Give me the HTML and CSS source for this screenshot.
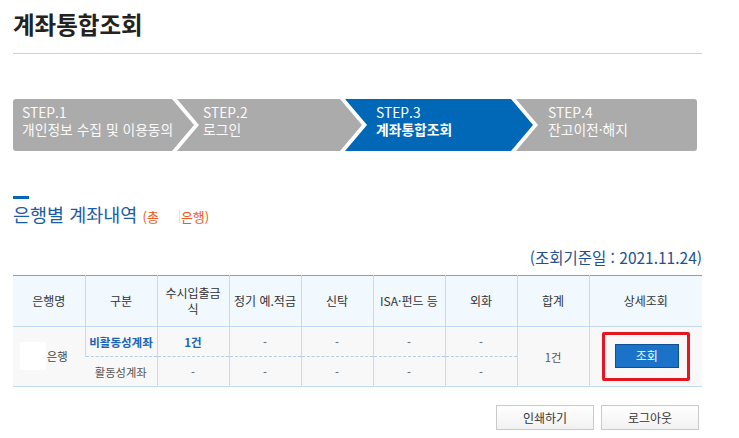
FILE: index.html
```html
<!DOCTYPE html>
<html lang="ko">
<head>
<meta charset="utf-8">
<title>계좌통합조회</title>
<link rel="stylesheet" href="styles.css">
</head>
<body>
<div class="page">
  <h1 class="title">계좌통합조회</h1>

  <ol class="steps">
    <li class="step step-1"><span class="step-no">STEP.1</span><span class="step-name">개인정보 수집 및 이용동의</span></li>
    <li class="step step-2"><span class="step-no">STEP.2</span><span class="step-name">로그인</span></li>
    <li class="step step-3 step-on"><span class="step-no">STEP.3</span><span class="step-name">계좌통합조회</span></li>
    <li class="step step-4"><span class="step-no">STEP.4</span><span class="step-name">잔고이전·해지</span></li>
  </ol>

  <div class="section-bar"></div>
  <h2 class="section-title">은행별 계좌내역 <span class="count">(총<span class="count-blank"></span>은행)</span></h2>

  <p class="date">(조회기준일 : 2021.11.24)</p>

  <table class="accounts">
    <colgroup>
      <col class="c72"><col class="c72"><col class="c72"><col class="c72"><col class="c72"><col class="c72"><col class="c72"><col class="c72"><col class="c113">
    </colgroup>
    <thead>
      <tr>
        <th>은행명</th>
        <th>구분</th>
        <th>수시입출금식</th>
        <th>정기 예.적금</th>
        <th>신탁</th>
        <th>ISA·펀드 등</th>
        <th>외화</th>
        <th>합계</th>
        <th>상세조회</th>
      </tr>
    </thead>
    <tbody>
      <tr class="row-top">
        <td rowspan="2" class="bank"><span class="bank-wrap"><span class="bank-logo"></span><span>은행</span></span></td>
        <td class="dash strong">비활동성계좌</td>
        <td class="dash strong">1건</td>
        <td class="dash">-</td>
        <td class="dash">-</td>
        <td class="dash">-</td>
        <td class="dash">-</td>
        <td rowspan="2">1건</td>
        <td rowspan="2"><span class="highlight"><button class="btn-view" type="button">조회</button></span></td>
      </tr>
      <tr>
        <td>활동성계좌</td>
        <td>-</td>
        <td>-</td>
        <td>-</td>
        <td>-</td>
        <td>-</td>
      </tr>
    </tbody>
  </table>

  <div class="actions">
    <button class="btn" type="button">인쇄하기</button>
    <button class="btn" type="button">로그아웃</button>
  </div>
</div>
</body>
</html>
```

FILE: styles.css
```css
* { box-sizing: border-box; }

html, body {
  margin: 0;
  padding: 0;
  background: #fff;
}

body {
  font-family: "Noto Sans CJK KR", "Noto Sans", sans-serif;
  color: #333;
}

.page {
  width: 739px;
  padding: 0 37px 0 13px;
}

.title {
  margin: 0;
  padding: 11px 0 16px;
  font-size: 23.5px;
  line-height: 26px;
  font-weight: 700;
  color: #222;
  border-bottom: 1px solid #cfcfcf;
}

/* steps */
.steps {
  list-style: none;
  margin: 45px 0 0;
  padding: 0;
  display: flex;
  height: 52px;
}

.step {
  flex: 0 0 auto;
  height: 52px;
  margin-left: -17px;
  padding-top: 5px;
  background: #ababab;
  color: #fafafa;
  display: flex;
  flex-direction: column;
  font-size: 13.8px;
  line-height: 17px;
  clip-path: polygon(0 0, calc(100% - 22px) 0, 100% 50%, calc(100% - 22px) 100%, 0 100%, 22px 50%);
}

.step-1 {
  width: 181px;
  margin-left: 0;
  padding-left: 9px;
  border-radius: 3px 0 0 3px;
  clip-path: polygon(0 0, calc(100% - 22px) 0, 100% 50%, calc(100% - 22px) 100%, 0 100%);
}

.step-2 {
  width: 185px;
  padding-left: 26px;
}

.step-3 {
  width: 188px;
  padding-left: 31px;
}

.step-4 {
  width: 181px;
  padding-left: 32px;
  border-radius: 0 3px 3px 0;
  clip-path: polygon(0 0, 100% 0, 100% 100%, 0 100%, 22px 50%);
}

.step-on {
  background: #0068b7;
  color: #fff;
}

.step-on .step-name {
  font-weight: 700;
}

.step-no,
.step-name {
  white-space: nowrap;
}

/* section heading */
.section-bar {
  width: 16px;
  height: 3px;
  margin-top: 45px;
  background: #0068b7;
}

.section-title {
  margin: 4px 0 0;
  font-size: 18.5px;
  line-height: 22px;
  font-weight: 400;
  color: #1b5ca6;
}

.count {
  font-size: 13px;
  color: #ef5a1e;
}

.count-blank {
  display: inline-block;
  width: 21px;
  height: 13px;
  vertical-align: -1px;
  border-right: 1px solid #f6d8f2;
  margin-right: 1px;
}

.date {
  margin: 20px 0 0;
  text-align: right;
  font-size: 15.5px;
  line-height: 18px;
  color: #22518f;
}

/* table */
.accounts {
  margin-top: 9px;
  width: 689px;
  table-layout: fixed;
  border-collapse: collapse;
  border-top: 1px solid #6ea4da;
}

.c72 { width: 72px; }
.c113 { width: 113px; }

.accounts th {
  height: 51px;
  padding: 0 4px;
  background: #f1f8fe;
  font-size: 12px;
  line-height: 16px;
  font-weight: 400;
  color: #333;
  border-left: 1px solid #c3dcf3;
  border-bottom: 1px solid #c3dcf3;
}

.accounts td {
  padding: 0;
  height: 30px;
  background: #f8f8f8;
  text-align: center;
  font-size: 11.3px;
  line-height: 14px;
  color: #555;
  white-space: nowrap;
  border-left: 1px solid #c3dcf3;
  border-bottom: 1px solid #c3dcf3;
}

.accounts th:first-child,
.accounts td:first-child {
  border-left: 0;
}

.accounts td.dash {
  border-bottom: 1px dashed #b4cde6;
}

.accounts td.strong {
  color: #1a64b4;
  font-weight: 700;
  font-size: 11.5px;
}

.bank-wrap {
  display: inline-flex;
  align-items: center;
  gap: 1px;
  color: #444;
}

.bank-logo {
  display: inline-block;
  width: 26px;
  height: 28px;
  background: #fff;
  margin-left: -10px;
}

.highlight {
  display: inline-block;
  padding: 9px 8px 10px 10px;
  border: 3px solid #e5161f;
  border-radius: 2px;
  vertical-align: middle;
}

.btn-view {
  display: block;
  width: 64px;
  height: 24px;
  padding: 0;
  margin: 0;
  background: #1a73c9;
  border: 1px solid #0f4f96;
  color: #fff;
  font-family: inherit;
  font-size: 12px;
  line-height: 20px;
}

/* bottom buttons */
.actions {
  display: flex;
  justify-content: flex-end;
  gap: 7px;
  margin-top: 18px;
  padding-right: 3px;
}

.btn {
  width: 98px;
  height: 25px;
  padding: 0;
  margin: 0;
  background: linear-gradient(#ffffff, #f1f1f1);
  border: 1px solid #c9c9c9;
  color: #333;
  font-family: inherit;
  font-size: 12px;
  line-height: 21px;
}
```
